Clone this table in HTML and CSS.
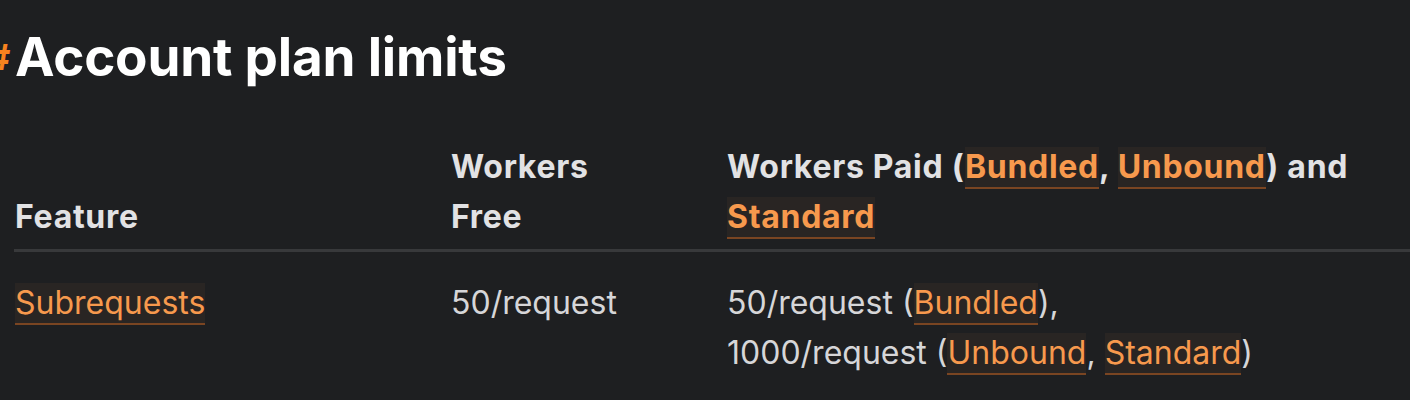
FILE: index.html
```html
<!DOCTYPE html>
<html lang="en">
<head>
<meta charset="utf-8">
<title>Account plan limits</title>
<link rel="stylesheet" href="styles.css">
</head>
<body>
<main class="content">
  <h1 class="title"><a class="anchor" href="#account-plan-limits">#</a>Account plan limits</h1>
  <table class="limits">
    <colgroup>
      <col class="c-feature">
      <col class="c-free">
      <col class="c-paid">
    </colgroup>
    <thead>
      <tr>
        <th class="col-feature">Feature</th>
        <th class="col-free">Workers Free</th>
        <th class="col-paid">Workers Paid (<a class="link" href="#">Bundled</a>, <a class="link" href="#">Unbound</a>) and <a class="link" href="#">Standard</a></th>
      </tr>
    </thead>
    <tbody>
      <tr>
        <td class="col-feature"><a class="link" href="#">Subrequests</a></td>
        <td class="col-free">50/request</td>
        <td class="col-paid">50/request (<a class="link" href="#">Bundled</a>),<br>1000/request (<a class="link" href="#">Unbound</a>, <a class="link" href="#">Standard</a>)</td>
      </tr>
    </tbody>
  </table>
</main>
</body>
</html>
```

FILE: styles.css
```css
html, body {
  margin: 0;
  padding: 0;
  background: #1e1f21;
  overflow: hidden;
}

body {
  font-family: Inter, "Noto Sans", sans-serif;
  color: #d6d6d8;
}

.content {
  padding-left: 14px;
}

.title {
  position: relative;
  margin: 0;
  padding-top: 25px;
  padding-left: 1px;
  font-size: 53px;
  font-weight: 700;
  line-height: 64px;
  color: #ffffff;
  letter-spacing: -0.2px;
}

.anchor {
  position: absolute;
  left: -27px;
  top: 25px;
  color: #f6821f;
  text-decoration: none;
  font-size: 36px;
  font-weight: 700;
}

.limits {
  margin-top: 53px;
  border-collapse: collapse;
  table-layout: fixed;
  width: 1420px;
  font-size: 32px;
  line-height: 50px;
}

.c-feature { width: 437px; }
.c-free { width: 276px; }

.limits th {
  text-align: left;
  vertical-align: bottom;
  font-weight: 700;
  letter-spacing: 0.7px;
  color: #e2e2e4;
  padding: 0 0 7px 0;
  border-bottom: 3px solid #38393b;
}

.limits td {
  vertical-align: top;
  font-weight: 400;
  color: #d6d6d8;
  padding: 26px 0 0 0;
}

.limits .col-feature {
  padding-left: 1px;
}

.limits .col-free {
  padding-right: 80px;
}

.link {
  color: #f7994d;
  text-decoration: none;
  background: rgba(247, 153, 77, 0.05);
  border-bottom: 2px solid #7a4522;
  padding-bottom: 1px;
}
```
